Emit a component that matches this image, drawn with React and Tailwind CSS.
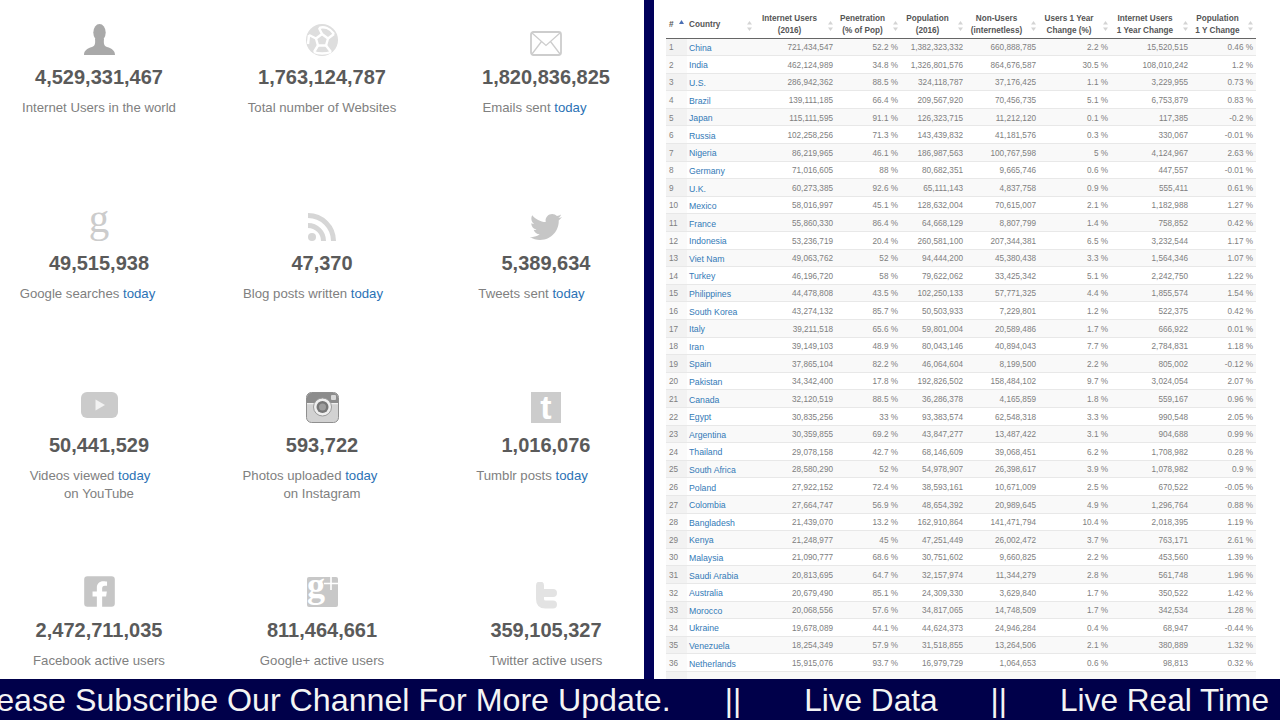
import { FaTwitter, FaFacebookSquare } from "react-icons/fa";

const rows = [
  ["China", "721,434,547", "52.2 %", "1,382,323,332", "660,888,785", "2.2 %", "15,520,515", "0.46 %"],
  ["India", "462,124,989", "34.8 %", "1,326,801,576", "864,676,587", "30.5 %", "108,010,242", "1.2 %"],
  ["U.S.", "286,942,362", "88.5 %", "324,118,787", "37,176,425", "1.1 %", "3,229,955", "0.73 %"],
  ["Brazil", "139,111,185", "66.4 %", "209,567,920", "70,456,735", "5.1 %", "6,753,879", "0.83 %"],
  ["Japan", "115,111,595", "91.1 %", "126,323,715", "11,212,120", "0.1 %", "117,385", "-0.2 %"],
  ["Russia", "102,258,256", "71.3 %", "143,439,832", "41,181,576", "0.3 %", "330,067", "-0.01 %"],
  ["Nigeria", "86,219,965", "46.1 %", "186,987,563", "100,767,598", "5 %", "4,124,967", "2.63 %"],
  ["Germany", "71,016,605", "88 %", "80,682,351", "9,665,746", "0.6 %", "447,557", "-0.01 %"],
  ["U.K.", "60,273,385", "92.6 %", "65,111,143", "4,837,758", "0.9 %", "555,411", "0.61 %"],
  ["Mexico", "58,016,997", "45.1 %", "128,632,004", "70,615,007", "2.1 %", "1,182,988", "1.27 %"],
  ["France", "55,860,330", "86.4 %", "64,668,129", "8,807,799", "1.4 %", "758,852", "0.42 %"],
  ["Indonesia", "53,236,719", "20.4 %", "260,581,100", "207,344,381", "6.5 %", "3,232,544", "1.17 %"],
  ["Viet Nam", "49,063,762", "52 %", "94,444,200", "45,380,438", "3.3 %", "1,564,346", "1.07 %"],
  ["Turkey", "46,196,720", "58 %", "79,622,062", "33,425,342", "5.1 %", "2,242,750", "1.22 %"],
  ["Philippines", "44,478,808", "43.5 %", "102,250,133", "57,771,325", "4.4 %", "1,855,574", "1.54 %"],
  ["South Korea", "43,274,132", "85.7 %", "50,503,933", "7,229,801", "1.2 %", "522,375", "0.42 %"],
  ["Italy", "39,211,518", "65.6 %", "59,801,004", "20,589,486", "1.7 %", "666,922", "0.01 %"],
  ["Iran", "39,149,103", "48.9 %", "80,043,146", "40,894,043", "7.7 %", "2,784,831", "1.18 %"],
  ["Spain", "37,865,104", "82.2 %", "46,064,604", "8,199,500", "2.2 %", "805,002", "-0.12 %"],
  ["Pakistan", "34,342,400", "17.8 %", "192,826,502", "158,484,102", "9.7 %", "3,024,054", "2.07 %"],
  ["Canada", "32,120,519", "88.5 %", "36,286,378", "4,165,859", "1.8 %", "559,167", "0.96 %"],
  ["Egypt", "30,835,256", "33 %", "93,383,574", "62,548,318", "3.3 %", "990,548", "2.05 %"],
  ["Argentina", "30,359,855", "69.2 %", "43,847,277", "13,487,422", "3.1 %", "904,688", "0.99 %"],
  ["Thailand", "29,078,158", "42.7 %", "68,146,609", "39,068,451", "6.2 %", "1,708,982", "0.28 %"],
  ["South Africa", "28,580,290", "52 %", "54,978,907", "26,398,617", "3.9 %", "1,078,982", "0.9 %"],
  ["Poland", "27,922,152", "72.4 %", "38,593,161", "10,671,009", "2.5 %", "670,522", "-0.05 %"],
  ["Colombia", "27,664,747", "56.9 %", "48,654,392", "20,989,645", "4.9 %", "1,296,764", "0.88 %"],
  ["Bangladesh", "21,439,070", "13.2 %", "162,910,864", "141,471,794", "10.4 %", "2,018,395", "1.19 %"],
  ["Kenya", "21,248,977", "45 %", "47,251,449", "26,002,472", "3.7 %", "763,171", "2.61 %"],
  ["Malaysia", "21,090,777", "68.6 %", "30,751,602", "9,660,825", "2.2 %", "453,560", "1.39 %"],
  ["Saudi Arabia", "20,813,695", "64.7 %", "32,157,974", "11,344,279", "2.8 %", "561,748", "1.96 %"],
  ["Australia", "20,679,490", "85.1 %", "24,309,330", "3,629,840", "1.7 %", "350,522", "1.42 %"],
  ["Morocco", "20,068,556", "57.6 %", "34,817,065", "14,748,509", "1.7 %", "342,534", "1.28 %"],
  ["Ukraine", "19,678,089", "44.1 %", "44,624,373", "24,946,284", "0.4 %", "68,947", "-0.44 %"],
  ["Venezuela", "18,254,349", "57.9 %", "31,518,855", "13,264,506", "2.1 %", "380,889", "1.32 %"],
  ["Netherlands", "15,915,076", "93.7 %", "16,979,729", "1,064,653", "0.6 %", "98,813", "0.32 %"],
];

const headers = [
  ["Internet Users", "(2016)", "w-[81px]"],
  ["Penetration", "(% of Pop)", "w-[65px]"],
  ["Population", "(2016)", "w-[65px]"],
  ["Non-Users", "(internetless)", "w-[73px]"],
  ["Users 1 Year", "Change (%)", "w-[72px]"],
  ["Internet Users", "1 Year Change", "w-[80px]"],
  ["Population", "1 Y Change", "w-[65px]"],
];

function PersonIcon() {
  return (
    <svg width="31" height="31" viewBox="0 0 31 31">
      <ellipse cx="15.5" cy="8.500" rx="6.200" ry="8.500" fill="#a9a9a9" />
      <path d="M0 31C0 26.500 3 24.500 8 23C11 22 11.500 19.500 11 15h9C19.500 19.500 20 22 23 23C28 24.500 31 26.500 31 31Z" fill="#a9a9a9" />
    </svg>
  );
}

function BallIcon() {
  return (
    <svg width="32" height="32" viewBox="0 0 32 32">
      <circle cx="16" cy="16" r="16" fill="#dedede" />
      <g stroke="#fff" strokeWidth="2.400" fill="none">
        <path d="M16 10L22 14.500L20 21.500H12L10 14.500Z" />
        <path d="M16 10L13 4M22 14.500L28 10M20 21.500L25 28M12 21.500L8 28M10 14.500L3 11" />
        <path d="M13 4C18 2 24 4 28 10M3 11L2 20M8 28C12 30 20 30 25 28" />
      </g>
    </svg>
  );
}

function MailIcon() {
  return (
    <svg width="32" height="25" viewBox="0 0 32 25" className="mt-[7px]">
      <rect x="1" y="1" width="30" height="23" rx="2.500" fill="#fff" stroke="#cdcdcd" strokeWidth="1.800" />
      <path d="M2 2L16 14.500L30 2M2 23L11.500 10.500M30 23L20.500 10.500" fill="none" stroke="#cdcdcd" strokeWidth="1.300" />
    </svg>
  );
}

function GoogleIcon() {
  return (
    <span className="-mt-[12px] font-['Liberation_Serif',serif] text-[41px] leading-none text-[#cccccc]">g</span>
  );
}

function RssIcon() {
  return (
    <svg width="28" height="28" viewBox="0 0 28 28" className="mt-[3px]">
      <circle cx="4" cy="24" r="4" fill="#d6d6d6" />
      <path d="M0 12.500A15.500 15.500 0 0 1 15.500 28M0 2.500A25.500 25.500 0 0 1 25.500 28" fill="none" stroke="#d6d6d6" strokeWidth="5" />
    </svg>
  );
}

function YoutubeIcon() {
  return (
    <svg width="37" height="26" viewBox="0 0 37 26">
      <rect width="37" height="26" rx="6" fill="#cbcbcb" />
      <path d="M14.500 7.500L24 13L14.500 18.500Z" fill="#f2f2f2" />
    </svg>
  );
}

function InstagramIcon() {
  return (
    <svg width="33" height="31" viewBox="0 0 33 31">
      <rect x="0.500" y="0.500" width="32" height="30" rx="5" fill="#d2d2d2" stroke="#8f8f8f" />
      <path d="M1 11V5.500C1 3 3 1 5.500 1h22C30 1 32 3 32 5.500V11H22A8 8 0 0 0 11 11Z" fill="#8c8c8c" />
      <rect x="1" y="11" width="10" height="1.200" fill="#eeeeee" />
      <rect x="22" y="11" width="10" height="1.200" fill="#eeeeee" />
      <rect x="25" y="3" width="5" height="5" rx="1" fill="#d8d8d8" />
      <circle cx="16.500" cy="15" r="9" fill="#efefef" stroke="#9a9a9a" />
      <circle cx="16.500" cy="15" r="6" fill="#777777" />
      <circle cx="16.500" cy="15" r="3.500" fill="#9d9d9d" />
    </svg>
  );
}

function TumblrIcon() {
  return (
    <svg width="30" height="31" viewBox="0 0 30 31">
      <rect width="30" height="31" fill="#cccccc" />
      <text x="15" y="27" textAnchor="middle" fontFamily="Liberation Sans" fontWeight="700" fontSize="34" fill="#fff">t</text>
    </svg>
  );
}

function GooglePlusIcon() {
  return (
    <svg width="31" height="30" viewBox="0 0 31 30">
      <rect width="31" height="30" rx="2" fill="#c8c8c8" />
      <text x="0" y="20" fontFamily="Liberation Serif" fontWeight="700" fontSize="36" fill="#fff">g</text>
      <path d="M24 0V13M17 6.500H31" stroke="#fff" strokeWidth="1.600" />
    </svg>
  );
}

function OldTwitterIcon() {
  return (
    <svg width="22" height="27" viewBox="0 0 22 27" className="mt-[5px]">
      <path d="M5 3.500V17Q5 22.500 10.500 22.500H18M5 11H18" fill="none" stroke="#e3e3e3" strokeWidth="8" strokeLinecap="round" />
    </svg>
  );
}

const stats = [
  { icon: <PersonIcon />, value: "4,529,331,467", label: "Internet Users in the world" },
  { icon: <BallIcon />, value: "1,763,124,787", label: "Total number of Websites" },
  { icon: <MailIcon />, value: "1,820,836,825", label: "Emails sent", today: true, trail: "w-[23px]" },
  { icon: <GoogleIcon />, value: "49,515,938", label: "Google searches", today: true, trail: "w-[23px]" },
  { icon: <RssIcon />, value: "47,370", label: "Blog posts written", today: true, trail: "w-[18px]" },
  { icon: <FaTwitter size={32} color="#c6c6c6" className="mt-[1px]" />, value: "5,389,634", label: "Tweets sent", today: true, trail: "w-[29px]" },
  { icon: <YoutubeIcon />, value: "50,441,529", label: "Videos viewed", today: true, trail: "w-[18px]", second: "on YouTube" },
  { icon: <InstagramIcon />, value: "593,722", label: "Photos uploaded", today: true, trail: "w-[24px]", second: "on Instagram" },
  { icon: <TumblrIcon />, value: "1,016,076", label: "Tumblr posts", today: true, trail: "w-[28px]" },
  { icon: <FaFacebookSquare size={35} color="#c6c6c6" className="-mt-[3px]" />, value: "2,472,711,035", label: "Facebook active users" },
  { icon: <GooglePlusIcon />, value: "811,464,661", label: "Google+ active users" },
  { icon: <OldTwitterIcon />, value: "359,105,327", label: "Twitter active users" },
];

function StatCard({ stat }) {
  return (
    <div className="flex flex-col items-center">
      <div className="flex h-[39px] justify-center">{stat.icon}</div>
      <div className="text-[20px] leading-[28px] font-bold text-[#5a5a5a]">{stat.value}</div>
      <div className="mt-[7.5px] text-center text-[13.2px] leading-[18px] text-[#808080]">
        <div className="whitespace-nowrap">
          {stat.label}
          {stat.today && <span className="text-[#2b72b5]"> today</span>}
          {stat.trail && <span className={`inline-block ${stat.trail}`} />}
        </div>
        {stat.second && <div>{stat.second}</div>}
      </div>
    </div>
  );
}

function SortArrows() {
  return (
    <svg width="5" height="10" viewBox="0 0 5 10" className="absolute right-[3px] top-[10px]">
      <path d="M2.500 0L5 3.500H0Z" fill="#d4d4d4" />
      <path d="M2.500 10L5 6.500H0Z" fill="#d4d4d4" />
    </svg>
  );
}

export default function App() {
  return (
    <div className="flex h-[720px] w-[1280px] flex-col overflow-hidden bg-white font-['Liberation_Sans',sans-serif]">
      <div className="flex h-[679px]">
        {/* Counters */}
        <div className="grid w-[644px] shrink-0 grid-cols-[198px_248px_200px] grid-rows-[186px_182px_185px_auto] overflow-hidden pt-[24px]">
          {stats.map((stat) => (
            <StatCard key={stat.value} stat={stat} />
          ))}
        </div>

        <div className="w-[10px] shrink-0 bg-[#00005a]" />

        {/* Country table */}
        <div className="flex-1 overflow-hidden bg-white pl-[12px] pt-[11px]">
          <table className="w-[590px] table-fixed border-collapse text-[8.2px] text-[#808080]">
            <thead>
              <tr className="h-[27px] border-b border-[#666666] text-[8.2px] leading-[12px] font-bold text-[#555555]">
                <th className="relative w-[21px] pt-[2px] pl-[3px] text-left">
                  #
                  <svg width="5" height="4" viewBox="0 0 5 4" className="absolute right-[3px] top-[9px]">
                    <path d="M2.500 0L5 4H0Z" fill="#4a6fb5" />
                  </svg>
                </th>
                <th className="relative w-[68px] pt-[2px] pl-[2px] text-left">
                  Country
                  <SortArrows />
                </th>
                {headers.map(([first, second, width]) => (
                  <th key={first + second} className={`relative pt-[2px] pr-[12px] text-center whitespace-nowrap ${width}`}>
                    {first}
                    <br />
                    {second}
                    <SortArrows />
                  </th>
                ))}
              </tr>
            </thead>
            <tbody>
              {rows.map((row, i) => (
                <tr key={row[0]} className={`h-[17.6px] border-b border-[#e8e8e8] ${i % 2 === 0 ? "bg-[#f9f9f9]" : "bg-white"}`}>
                  <td className={`pl-[3px] pt-[3px] ${i % 2 === 0 ? "bg-[#f2f2f2]" : "bg-[#fafafa]"}`}>{i + 1}</td>
                  <td className="pl-[2px] pt-[3px] text-[8.7px] text-[#337ab7] whitespace-nowrap">{row[0]}</td>
                  {row.slice(1).map((cell, j) => (
                    <td key={j} className="pr-[3px] pt-[3px] text-right whitespace-nowrap">{cell}</td>
                  ))}
                </tr>
              ))}
              <tr className="h-[17.6px] bg-[#f9f9f9]">
                <td className="bg-[#f2f2f2]" />
                <td colSpan={8} />
              </tr>
            </tbody>
          </table>
        </div>
      </div>

      {/* Ticker */}
      <div className="flex h-[41px] items-center justify-end overflow-hidden bg-[#00004a] pt-[2px] pr-[11px] text-[31.6px] leading-none whitespace-nowrap text-[#f4f4f4]">
        <span className="shrink-0 text-[32.2px]">Please Subscribe Our Channel For More Update.</span>
        <span className="ml-[54px] shrink-0">||</span>
        <span className="ml-[63px] shrink-0">Live Data</span>
        <span className="ml-[53px] shrink-0">||</span>
        <span className="ml-[53px] shrink-0">Live Real Time</span>
      </div>
    </div>
  );
}
